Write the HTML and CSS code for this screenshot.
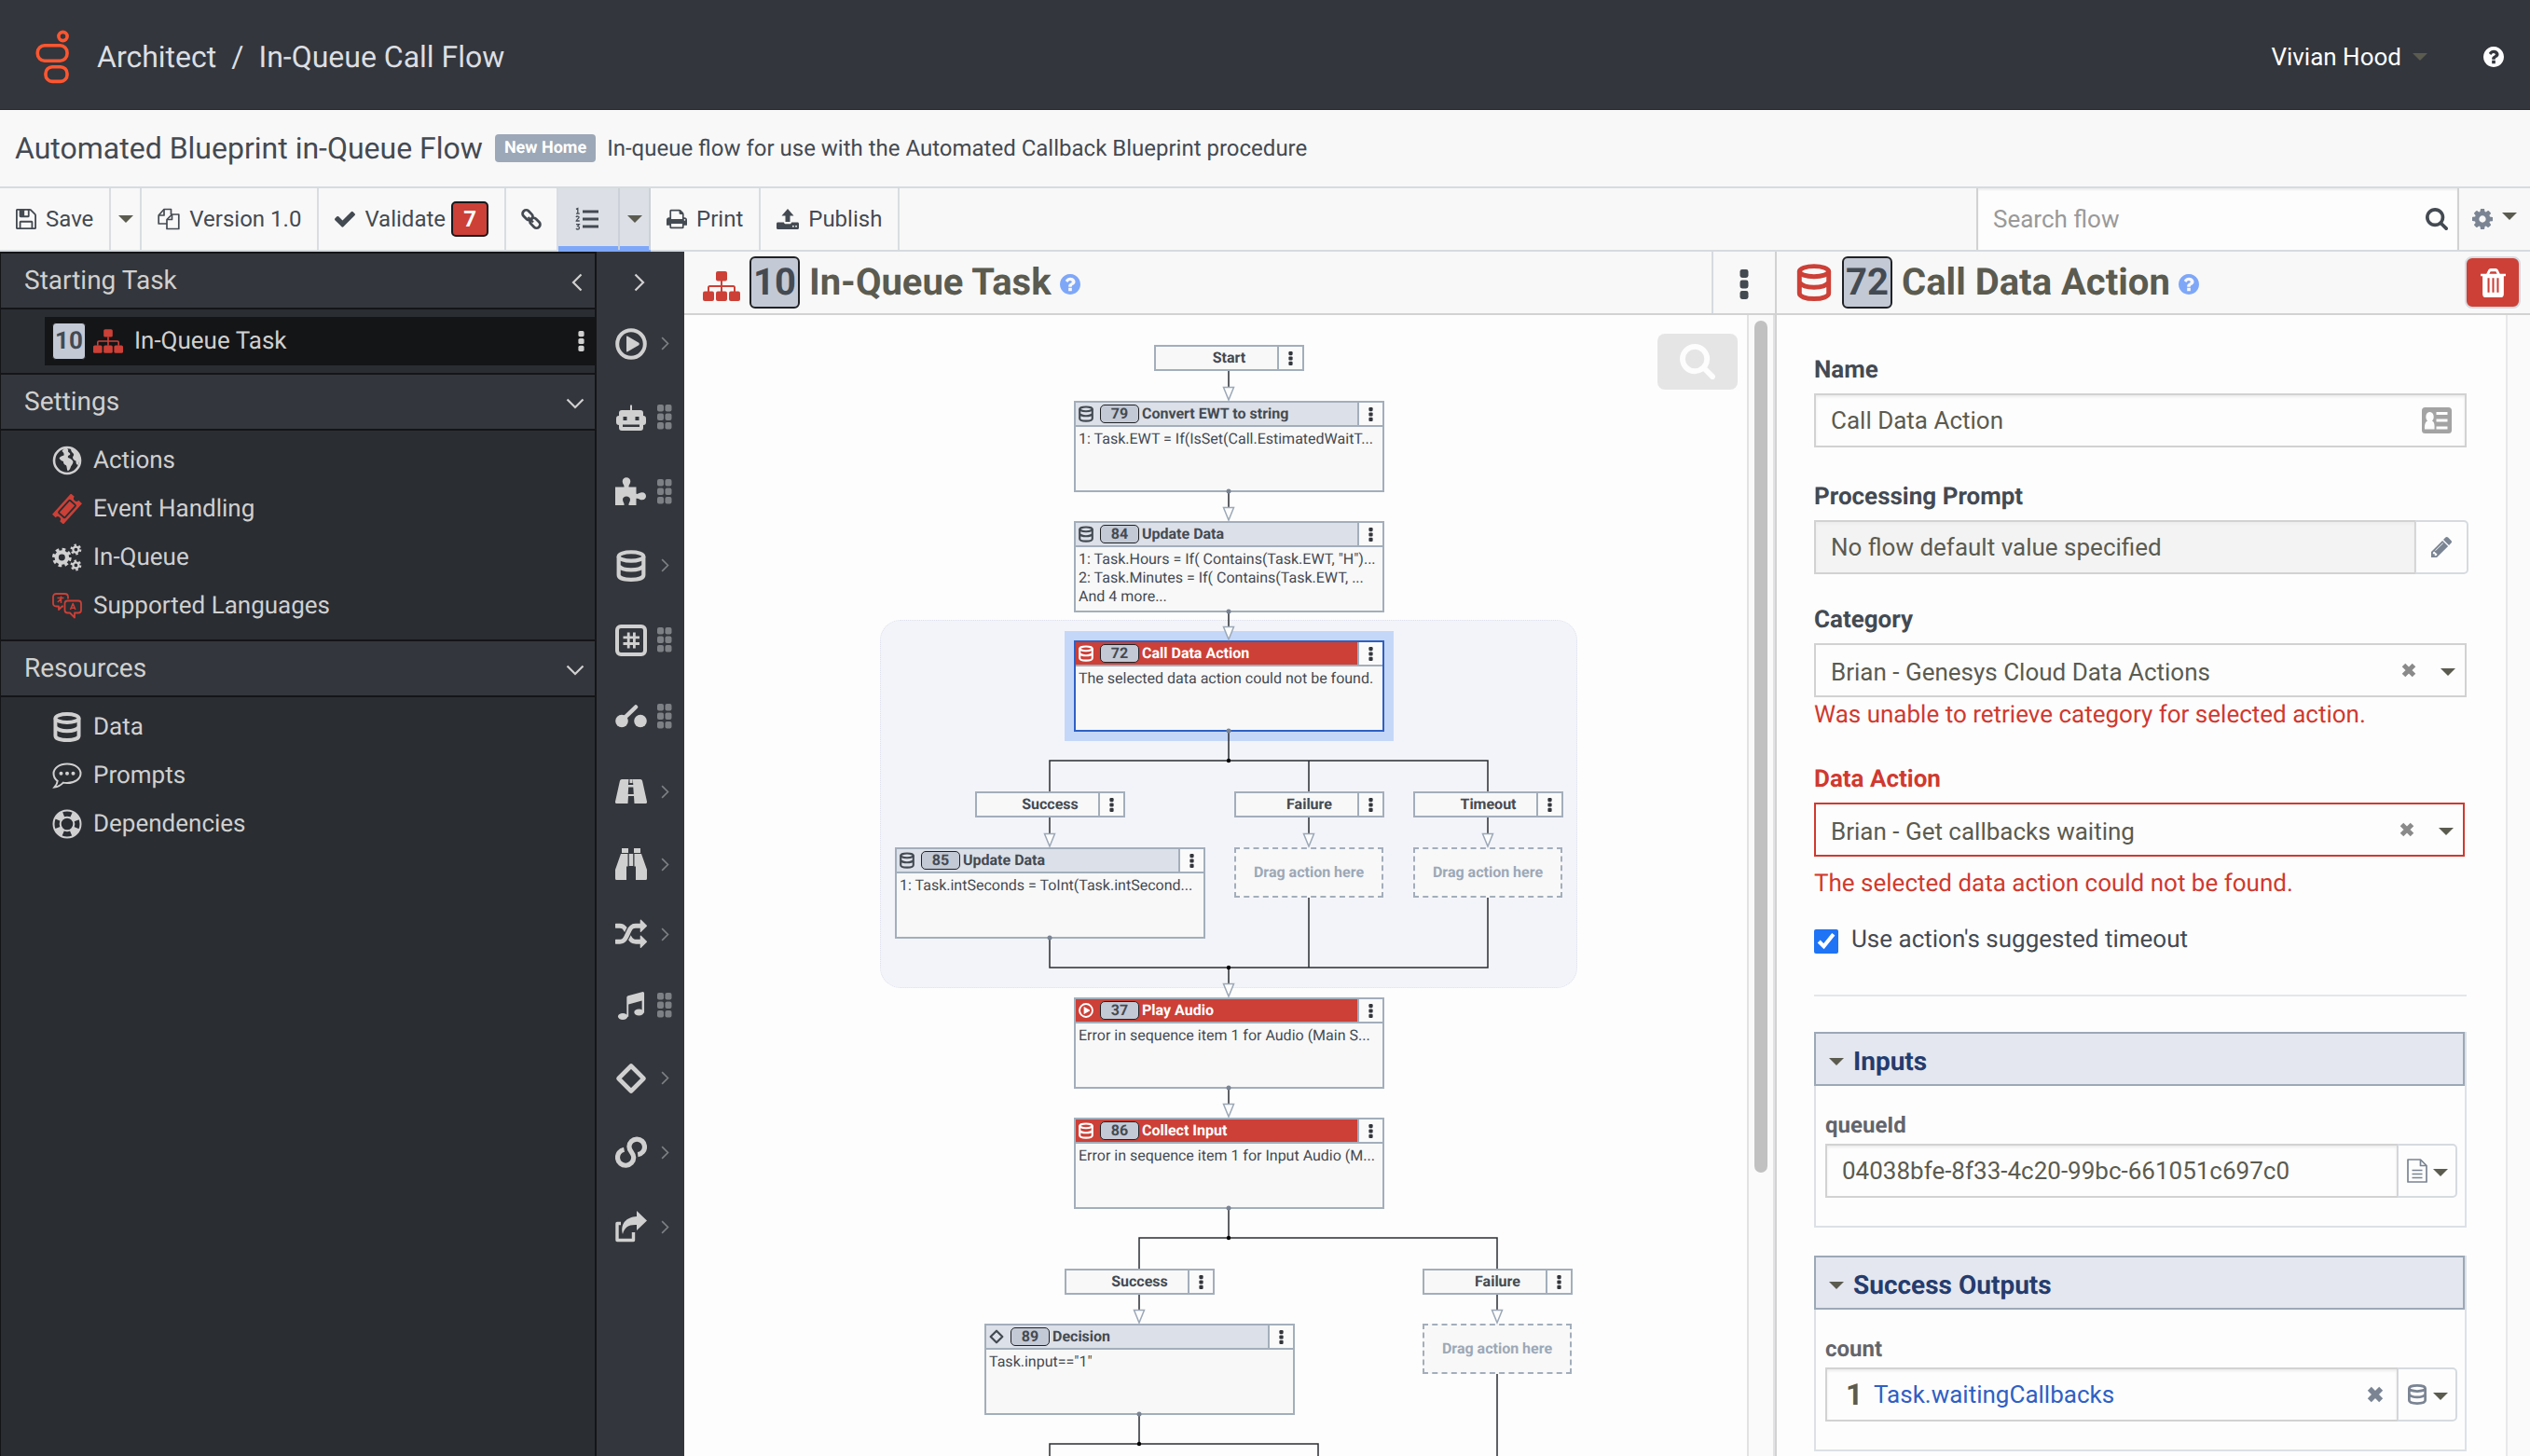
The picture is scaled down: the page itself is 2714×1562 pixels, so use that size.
FILE: index.html
```html
<!DOCTYPE html>
<html lang="en">
<head>
<meta charset="utf-8">
<meta name="viewport" content="width=device-width, initial-scale=1">
<title>Architect / In-Queue Call Flow</title>
<link rel="stylesheet" href="styles.css">
</head>
<body>
<svg class="sprite" aria-hidden="true">
  <symbol id="i-save" viewBox="128 128 1536 1536"><path d="M512 1536h768v-384h-768v384zm896 0h128v-896q0-14-10-38.500t-20-34.500l-281-281q-10-10-34-20t-39-10v416q0 40-28 68t-68 28h-576q-40 0-68-28t-28-68v-416h-128v1280h128v-416q0-40 28-68t68-28h832q40 0 68 28t28 68v416zm-384-928v-320q0-13-9.500-22.500t-22.500-9.500h-192q-13 0-22.500 9.500t-9.500 22.500v320q0 13 9.500 22.500t22.500 9.500h192q13 0 22.500-9.500t9.500-22.500zm640 32v928q0 40-28 68t-68 28h-1344q-40 0-68-28t-28-68v-1344q0-40 28-68t68-28h928q40 0 88 20t76 48l280 280q28 28 48 76t20 88z"/></symbol>
  <symbol id="i-help" viewBox="128 128 1536 1536"><path d="M1024 1376v-192q0-14-9-23t-23-9h-192q-14 0-23 9t-9 23v192q0 14 9 23t23 9h192q14 0 23-9t9-23zm256-672q0-88-55.500-163t-138.500-116-170-41q-243 0-371 213-15 24 8 42l132 100q7 6 19 6 16 0 25-12 53-68 86-92 34-24 86-24 48 0 85.500 26t37.500 59q0 38-20 61t-68 45q-63 28-115.500 86.500t-52.500 125.500v36q0 14 9 23t23 9h192q14 0 23-9t9-23q0-19 21.500-49.500t54.500-49.500q32-18 49-28.500t46-35 44.500-48 28-60.500 12.500-81zm384 192q0 209-103 385.500t-279.500 279.500-385.500 103-385.500-103-279.500-279.500-103-385.500 103-385.500 279.500-279.500 385.500-103 385.500 103 279.500 279.500 103 385.500z"/></symbol>
  <symbol id="i-search" viewBox="64 128 1664 1664"><path d="M1216 832q0-185-131.500-316.500t-316.500-131.500-316.500 131.500-131.500 316.500 131.500 316.500 316.500 131.500 316.500-131.500 131.500-316.500zm512 832q0 52-38 90t-90 38q-54 0-90-38l-343-342q-179 124-399 124-143 0-273.500-55.500t-225-150-150-225-55.500-273.500 55.500-273.500 150-225 225-150 273.500-55.500 273.500 55.500 225 150 150 225 55.500 273.500q0 220-124 399l343 343q37 37 37 90z"/></symbol>
  <symbol id="i-check" viewBox="121 300 1550 1222"><path d="M1671 566q0 40-28 68l-724 724-136 136q-28 28-68 28t-68-28l-136-136-362-362q-28-28-28-68t28-68l136-136q28-28 68-28t68 28l294 295 656-657q28-28 68-28t68 28l136 136q28 28 28 68z"/></symbol>
  <symbol id="i-print" viewBox="64 128 1664 1536"><path d="M448 1536h896v-256h-896v256zm0-640h896v-384h-160q-40 0-68-28t-28-68v-160h-640v640zm1152 64q0-26-19-45t-45-19-45 19-19 45 19 45 45 19 45-19 19-45zm128 0v416q0 13-9.500 22.500t-22.500 9.500h-224v160q0 40-28 68t-68 28h-960q-40 0-68-28t-28-68v-160h-224q-13 0-22.500-9.500t-9.500-22.500v-416q0-79 56.500-135.500t135.500-56.500h64v-544q0-40 28-68t68-28h672q40 0 88 20t76 48l152 152q28 28 48 76t20 88v256h64q79 0 135.500 56.500t56.500 135.500z"/></symbol>
  <symbol id="i-cog" viewBox="128 128 1536 1536"><path d="M1152 896q0-106-75-181t-181-75-181 75-75 181 75 181 181 75 181-75 75-181zm512-109v222q0 12-8 23t-20 13l-185 28q-19 54-39 91 35 50 107 138 10 12 10 25t-9 23q-27 37-99 108t-94 71q-12 0-26-9l-138-108q-44 23-91 38-16 136-29 186-7 28-36 28h-222q-14 0-24.500-8.500t-11.500-21.500l-28-184q-49-16-90-37l-141 107q-10 9-25 9-14 0-25-11-126-114-165-168-7-10-7-23 0-12 8-23 15-21 51-66.500t54-70.500q-27-50-41-99l-183-27q-13-2-21-12.500t-8-23.500v-222q0-12 8-23t19-13l186-28q14-46 39-92-40-57-107-138-10-12-10-24 0-10 9-23 26-36 98.500-107.500t94.500-71.500q13 0 26 10l138 107q44-23 91-38 16-136 29-186 7-28 36-28h222q14 0 24.500 8.500t11.500 21.500l28 184q49 16 90 37l142-107q9-9 24-9 13 0 25 10 129 119 165 170 7 8 7 22 0 12-8 23-15 21-51 66.500t-54 70.500q26 50 41 98l183 28q13 2 21 12.500t8 23.500z"/></symbol>
  <symbol id="i-random" viewBox="0 100 1792 1600"><path d="M666 481q-60 92-137 273-22-45-37-72.500t-40.500-63.500-51-56.500-63-35-81.500-14.500h-224q-14 0-23-9t-9-23v-192q0-14 9-23t23-9h224q250 0 410 225zm1126 799q0 14-9 23l-320 320q-9 9-23 9-13 0-22.500-9.500t-9.500-22.500v-192q-32 0-85 .5t-81 1-73-1-71-5-64-10.500-63-18.500-58-28.500-59-40-55-53.500-56-69.500q59-93 136-273 22 45 37 72.500t40.500 63.500 51 56.500 63 35 81.500 14.500h256v-192q0-14 9-23t23-9q12 0 24 10l319 319q9 9 9 23zm0-896q0 14-9 23l-320 320q-9 9-23 9-13 0-22.500-9.500t-9.500-22.500v-192h-256q-48 0-87 15t-69 45-51 61.500-45 77.500q-32 62-78 171-29 66-49.500 111t-54 105-64 100-74 83-90 68.500-106.500 42-128 16.500h-224q-14 0-23-9t-9-23v-192q0-14 9-23t23-9h224q48 0 87-15t69-45 51-61.500 45-77.500q32-62 78-171 29-66 49.500-111t54-105 64-100 74-83 90-68.500 106.500-42 128-16.500h256v-192q0-14 9-23t23-9q12 0 24 10l319 319q9 9 9 23z"/></symbol>
  <symbol id="i-pencil" viewBox="128 149 1515 1515"><path d="M491 1536l91-91-235-235-91 91v107h128v128h107zm523-928q0-22-22-22-10 0-17 7l-542 542q-7 7-7 17 0 22 22 22 10 0 17-7l542-542q7-7 7-17zm-54-192l416 416-832 832h-416v-416zm683 96q0 53-37 90l-166 166-416-416 166-165q36-38 90-38 53 0 91 38l235 234q37 39 37 91z"/></symbol>
  <symbol id="i-copy" viewBox="0 0 24 24"><g fill="none" stroke="currentColor" stroke-width="1.700" stroke-linejoin="round"><path d="M10 17H1.200V8L7 1.500h7.500V7"/><path d="M7 1.500V8H1.200"/><path d="M10 12.500L15.500 7h7.300v15.500H10z"/><path d="M15.500 7v5.500H10"/></g></symbol>
  <symbol id="i-link" viewBox="0 0 24 24"><g fill="none" stroke="currentColor" stroke-width="2.800"><rect x="2" y="4" width="12" height="7.500" rx="3.500" transform="rotate(45 8 7.800)"/><rect x="10" y="12.500" width="12" height="7.500" rx="3.500" transform="rotate(45 16 16.200)"/></g><path d="M8.500 10l5.500 5.500" stroke="currentColor" stroke-width="2.400"/></symbol>
  <symbol id="i-list" viewBox="0 0 26 26"><g fill="none" stroke="currentColor"><path stroke-width="3" d="M8 5h17M8 13h17M8 21h17"/><path stroke-width="1.300" d="M1 2.300L2.800 1.500V7M1 7.200h3.800M1 11c.5-1.400 3.500-1.300 3 .4C3.800 12.500 1.300 13.500 1.200 15H4.700M1 18.700h3.300l-1.600 2c2.400.1 2.200 3.300.1 3.300-.8 0-1.400-.3-1.900-.8"/></g></symbol>
  <symbol id="i-publish" viewBox="0 0 24 22"><path d="M12 0l6.500 7.500h-4V14h-5V7.500h-4zM1.500 14.500h6.300c.5 1.300 1.300 1.800 2.400 1.800h3.600c1.100 0 1.900-.5 2.400-1.800h6.300c.9 0 1.500.6 1.500 1.500V20.500c0 .9-.6 1.500-1.500 1.500h-21c-.9 0-1.500-.6-1.500-1.500V16c0-.9.600-1.500 1.500-1.500zM17 18v1.500h1.700V18zm3.200 0v1.500h1.700V18z"/></symbol>
  <symbol id="i-caret" viewBox="0 0 16 8"><path d="M0 0h16l-8 8z"/></symbol>
  <symbol id="i-dots" viewBox="0 0 10 32"><rect x=".5" width="9" height="9" rx="2.400"/><rect x=".5" y="11.500" width="9" height="9" rx="2.400"/><rect x=".5" y="23" width="9" height="9" rx="2.400"/></symbol>
  <symbol id="i-left" viewBox="0 0 12 20"><path d="M10.500 1.500L2 10l8.500 8.500" fill="none" stroke="currentColor" stroke-width="2.200"/></symbol>
  <symbol id="i-right" viewBox="0 0 12 20"><path d="M1.500 1.500L10 10l-8.500 8.500" fill="none" stroke="currentColor" stroke-width="2.200"/></symbol>
  <symbol id="i-down" viewBox="0 0 20 12"><path d="M1.500 1.500L10 10l8.500-8.500" fill="none" stroke="currentColor" stroke-width="2.200"/></symbol>
  <symbol id="i-sitemap" viewBox="0 0 40 32"><rect x="14" width="12" height="10.500" rx="2"/><rect y="21.500" width="12" height="10.500" rx="2"/><rect x="14" y="21.500" width="12" height="10.500" rx="2"/><rect x="28" y="21.500" width="12" height="10.500" rx="2"/><path d="M20 10v12M6 22v-4.500q0-1.500 1.500-1.500h25q1.500 0 1.500 1.500V22" fill="none" stroke="currentColor" stroke-width="2"/></symbol>
  <symbol id="i-db" viewBox="0 0 24 26"><g fill="none" stroke="currentColor" stroke-width="3.200"><ellipse cx="12" cy="5.300" rx="10.200" ry="3.600"/><path d="M1.800 5.300v15.200c0 2.300 4 3.900 10.200 3.900s10.200-1.600 10.200-3.900V5.300M1.800 13c1.600 2.200 5.600 3.400 10.200 3.400s8.600-1.200 10.200-3.400"/></g></symbol>
  <symbol id="i-trash" viewBox="0 0 26 30"><path fill-rule="evenodd" d="M0 5.500h6L8 1.500Q8.700 0 10.300 0h5.400q1.600 0 2.300 1.500l2 4h6V8h-2v18.500q0 3.500-3.300 3.500H5.300Q2 30 2 26.500V8H0zm9 0h8l-1.200-2.300h-5.600zM7.200 10v15h2V10zm4.800 0v15h2V10zm4.800 0v15h2V10z"/></symbol>
  <symbol id="i-globe" viewBox="0 0 32 32"><circle cx="16" cy="16" r="14" fill="none" stroke="currentColor" stroke-width="2.600"/><path d="M14.500 2.500c2.500.5 3 2 2.500 4 1.500 1.500 3 2 2 3.500-2 .5-2.500 1.500-2 3 2.500 1 5 2 5.500 4.500-.5 3-2.500 4-3 6.500-.5 1.500-1.500 3-2.800 3.200-1.200-1.700-.7-4-1.700-6-2.500-.7-3-2.200-3-4.200-2-.5-3.500-1.500-4.500-3.500 1.500-2 3-2.500 5-3 .5-2-.5-3-2-4.500 1-2 2.500-3 4-3.500zM20 3.500c4.500 1 8 4.500 9 9 .5 3 0 6-1.500 8.500-2-.5-2-2.500-2-4.500-2-.5-3.500-2-3.500-4 .5-1.500 1.500-2 1-3.500-1.500-1.500-3-3-3-5.500z"/></symbol>
  <symbol id="i-ticket" viewBox="0 0 32 32"><g transform="rotate(-48 16 16)"><path d="M1 8h30v5a3 3 0 0 0 0 6v5H1v-5a3 3 0 0 0 0-6z"/><rect x="7" y="11.500" width="18" height="9" rx="1" fill="none" stroke="#2a2d32" stroke-width="1.800"/></g></symbol>
  <symbol id="i-cogs" viewBox="0 0 34 32"><circle cx="11" cy="16" r="6" fill="none" stroke="currentColor" stroke-width="4.600"/><circle cx="11" cy="16" r="9.200" fill="none" stroke="currentColor" stroke-width="3.600" stroke-dasharray="3.800 3.420"/><g fill="none" stroke="currentColor"><circle cx="27" cy="7" r="3.200" stroke-width="2.400"/><circle cx="27" cy="7" r="5" stroke-width="2.600" stroke-dasharray="2.500 2.740"/><circle cx="27" cy="25" r="3.200" stroke-width="2.400"/><circle cx="27" cy="25" r="5" stroke-width="2.600" stroke-dasharray="2.500 2.740"/></g></symbol>
  <symbol id="i-lang" viewBox="0 0 32 28"><g fill="none" stroke="currentColor" stroke-width="1.800" stroke-linejoin="round"><path d="M12 14.500h-1.500L7 18v-3.500H4.500Q1 14.500 1 11V4.500Q1 1 4.500 1h9Q17 1 17 4.500V6.500"/><path d="M16.500 8.500H28q3 0 3 3v7q0 3-3 3h-4V26.500l-5-5h-2.500q-3 0-3-3v-7q0-3 3-3z"/><path stroke-width="1.500" d="M19.500 18l2.700-6.500 2.700 6.500M20.300 16.300h3.800M5.500 5.500h7M9.500 3.500V11M9.500 6.500L5.800 10"/></g></symbol>
  <symbol id="i-speech" viewBox="0 0 32 28"><path d="M16 1.500c8.300 0 14.500 4.500 14.500 10.300S24.300 22 16 22c-1.500 0-3-.1-4.200-.4C9 24.500 6 26.300 2.500 26.500c1.800-2 3-4 3.200-6.700C3 18 1.500 15 1.500 11.800 1.500 6 7.700 1.500 16 1.500z" fill="none" stroke="currentColor" stroke-width="2"/><circle cx="9.500" cy="11.800" r="2"/><circle cx="16" cy="11.800" r="2"/><circle cx="22.500" cy="11.800" r="2"/></symbol>
  <symbol id="i-ring" viewBox="0 0 32 32"><g fill="none" stroke="currentColor"><circle cx="16" cy="16" r="14.500" stroke-width="2"/><circle cx="16" cy="16" r="7.300" stroke-width="2"/><circle cx="16" cy="16" r="10.900" stroke-width="7" stroke-dasharray="8.560 8.560" stroke-dashoffset="-4.280"/></g></symbol>
  <symbol id="i-play" viewBox="0 0 34 34"><circle cx="17" cy="17" r="14.800" fill="none" stroke="currentColor" stroke-width="4"/><path d="M12 9.500q0-1.500 1.300-.7l12 7q1.200 1.200 0 2.400l-12 7q-1.300.8-1.300-.7z"/></symbol>
  <symbol id="i-bot" viewBox="0 0 34 30"><path fill-rule="evenodd" d="M16 2q1-1.500 2 0v5h9q3 0 3 3v3q3 0 3 3v4q0 3-3 3v3q0 3-3 3H7q-3 0-3-3v-3q-3 0-3-3v-4q0-3 3-3v-3q0-3 3-3h9zM8.500 14v4h4v-4zm13 0v4h4v-4zM8 22.500V25h18v-2.500z"/></symbol>
  <symbol id="i-puzzle" viewBox="0 0 34 30"><path d="M0 10.500h9.500c.5-2-1.800-3.500-1.800-6C7.700 2 9.500.3 12 .3s4.300 1.700 4.300 4.200c0 2.500-2.300 4-1.800 6h8v7.300c2.500.6 3.500-1.500 6.300-1.500 2.700 0 4.200 1.700 4.200 4s-1.500 4-4.200 4c-2.800 0-3.800-2.200-6.300-1.500V30h-8c-.6-2 1.500-3.500 1.500-6 0-2.300-1.800-3.600-4-3.600S8 21.700 8 24c0 2.500 2.200 4 1.500 6H0z"/></symbol>
  <symbol id="i-hash" viewBox="0 0 34 34"><g fill="none" stroke="currentColor"><rect x="2" y="2" width="30" height="30" rx="4" stroke-width="4"/><path stroke-width="2.800" d="M14.200 8.500v17M20.400 8.500v17M8.500 13.800h17.500M8.500 20.500h17.500"/></g></symbol>
  <symbol id="i-switch" viewBox="0 0 34 26"><circle cx="7" cy="18.500" r="6.800"/><circle cx="27" cy="18.500" r="6.800"/><path d="M9 16L22 3.500" stroke="currentColor" stroke-width="4.500" stroke-linecap="round"/></symbol>
  <symbol id="i-road" viewBox="0 0 34 26"><path fill-rule="evenodd" d="M7 0h7.500l-.6 6h5.400l-.6-6H27q1.500 0 2 1.500l5 22.500q.3 2-1.500 2H20.500l-.5-8h-6l-.5 8H1.500Q-.3 26 0 24L5 1.500Q5.500 0 7 0zM15.500 0h3v4h-3zm-1.300 8.500L13.700 16h6.100l-.5-7.500z"/></symbol>
  <symbol id="i-binoc" viewBox="0 0 34 34"><path d="M7 0h7v5H7zM20 0h7v5h-7zM14.800 6h4.400v13h-4.400zM6 6h7.500v13.500H12V34H1.500Q0 34 0 32.500V23zM28 6h-7.500v13.500H22V34h10.500q1.500 0 1.500-1.500V23z"/></symbol>
  <symbol id="i-music" viewBox="0 0 30 32"><ellipse cx="5.500" cy="28.300" rx="5.500" ry="3.700"/><ellipse cx="24" cy="23.500" rx="5.500" ry="3.700"/><path d="M10 6.500Q10 5 11.500 4.500l16-4.300Q30-.4 30 1.700V24h-2.600V10L12 14.500v14H10z"/></symbol>
  <symbol id="i-diamond" viewBox="0 0 34 34"><path d="M17 3.500L30.500 17 17 30.500 3.500 17z" fill="none" stroke="currentColor" stroke-width="4.600" stroke-linejoin="round"/></symbol>
  <symbol id="i-loop" viewBox="0 0 34 34"><path d="M9.500 14.200a8.600 8.600 0 1 0 10.200 8.400c0-4.600-4.800-6.600-4.800-11.600a8.300 8.300 0 1 1 9.300 8.600" fill="none" stroke="currentColor" stroke-width="5.200"/></symbol>
  <symbol id="i-share" viewBox="0 0 34 34"><path d="M6 13.500H2V31.500H19.500V23" fill="none" stroke="currentColor" stroke-width="3.400" stroke-linejoin="round"/><path d="M23 0l11 10.500L23 21v-6C15 14.500 10 17 8 25 5 14 12 6.500 23 6z"/></symbol>
  <symbol id="i-grip" viewBox="0 0 16 27"><g><rect width="7" height="7.500" rx="2"/><rect x="8.500" width="7" height="7.500" rx="2"/><rect y="9.500" width="7" height="7.500" rx="2"/><rect x="8.500" y="9.500" width="7" height="7.500" rx="2"/><rect y="19" width="7" height="7.500" rx="2"/><rect x="8.500" y="19" width="7" height="7.500" rx="2"/></g></symbol>
  <symbol id="i-times" viewBox="0 0 16 16"><path d="M2.500 2.500l11 11M13.500 2.500l-11 11" stroke="currentColor" stroke-width="5"/></symbol>
  <symbol id="i-card" viewBox="0 0 32 28"><path fill-rule="evenodd" d="M3.500 0h25Q32 0 32 3.500v21q0 3.500-3.500 3.500h-25Q0 28 0 24.500v-21Q0 0 3.500 0zM3 23.500h10.500C14 18 13 15.500 11 14.500c1.500-1.500 2-3.500 1.500-6C12 6.500 10.500 5 8.500 5S5 6.500 4.500 8.500c-.5 2.500 0 4.500 1.500 6-2 1-3.300 3.500-3 9zM15.500 5v3h12V5zm0 7.500v3h12v-3zm0 8v3h12v-3z"/></symbol>
  <symbol id="i-doc" viewBox="0 0 22 26"><path d="M1 1h13.500L21 7.500V25H1zM14.500 1v6.500H21M5.500 12.500h11M5.500 16.500h11M5.500 20.500h11" fill="none" stroke="currentColor" stroke-width="1.700" stroke-linejoin="round"/></symbol>
</svg>

<header class="topbar">
  <svg class="logo" viewBox="38 29 37 58" aria-label="Genesys"><g fill="none" stroke="#ff5630" stroke-width="3.600"><circle cx="67.500" cy="36" r="4.600"/><rect x="40.300" y="45.800" width="31.700" height="16.400" rx="7.500"/><rect x="49" y="68.800" width="23" height="15.600" rx="7"/></g></svg>
  <nav class="crumbs"><a href="#">Architect</a><span>/</span><a href="#">In-Queue Call Flow</a></nav>
  <button class="user" type="button">Vivian Hood <svg class="caret"><use href="#i-caret"/></svg></button>
  <button class="help" type="button" aria-label="Help"><svg class="ic22"><use href="#i-help"/></svg></button>
</header>

<div class="titlebar">
  <h1>Automated Blueprint in-Queue Flow</h1>
  <span class="tag">New Home</span>
  <p>In-queue flow for use with the Automated Callback Blueprint procedure</p>
</div>

<div class="toolbar">
  <button type="button"><svg class="ic22"><use href="#i-save"/></svg>Save</button>
  <button type="button" class="drop" aria-label="Save options"><svg class="caret"><use href="#i-caret"/></svg></button>
  <button type="button"><svg class="ic24"><use href="#i-copy"/></svg>Version 1.0</button>
  <button type="button"><svg class="ic22"><use href="#i-check"/></svg>Validate<span class="count">7</span></button>
  <button type="button" class="icon-only" aria-label="Link"><svg class="ic24"><use href="#i-link"/></svg></button>
  <button type="button" class="list on" aria-label="Numbering"><svg class="ic26"><use href="#i-list"/></svg></button>
  <button type="button" class="drop on" aria-label="Numbering options"><svg class="caret"><use href="#i-caret"/></svg></button>
  <button type="button"><svg class="ic22"><use href="#i-print"/></svg>Print</button>
  <button type="button"><svg class="ic24"><use href="#i-publish"/></svg>Publish</button>
  <div class="search">
    <input type="text" placeholder="Search flow" aria-label="Search flow">
    <svg class="ic24"><use href="#i-search"/></svg>
  </div>
  <button type="button" class="gear" aria-label="Settings"><svg class="ic22"><use href="#i-cog"/></svg><svg class="caret"><use href="#i-caret"/></svg></button>
</div>

<div class="workspace">
  <nav class="side">
    <h2>Starting Task <button type="button" aria-label="Collapse"><svg class="chev"><use href="#i-left"/></svg></button></h2>
    <div class="tasks">
      <a class="task" href="#"><span class="num">10</span><svg class="ic30 red"><use href="#i-sitemap"/></svg><span class="grow">In-Queue Task</span><svg class="dots"><use href="#i-dots"/></svg></a>
    </div>
    <h2>Settings <button type="button" aria-label="Toggle settings"><svg class="chev-d"><use href="#i-down"/></svg></button></h2>
    <ul>
      <li><a href="#"><svg class="ic30"><use href="#i-globe"/></svg>Actions</a></li>
      <li><a href="#"><svg class="ic30 red"><use href="#i-ticket"/></svg>Event Handling</a></li>
      <li><a href="#"><svg class="ic30"><use href="#i-cogs"/></svg>In-Queue</a></li>
      <li><a href="#"><svg class="ic30 red"><use href="#i-lang"/></svg>Supported Languages</a></li>
    </ul>
    <h2>Resources <button type="button" aria-label="Toggle resources"><svg class="chev-d"><use href="#i-down"/></svg></button></h2>
    <ul>
      <li><a href="#"><svg class="ic30"><use href="#i-db"/></svg>Data</a></li>
      <li><a href="#"><svg class="ic30"><use href="#i-speech"/></svg>Prompts</a></li>
      <li><a href="#"><svg class="ic30"><use href="#i-ring"/></svg>Dependencies</a></li>
    </ul>
  </nav>

  <div class="rail">
    <button type="button" class="expand" aria-label="Expand toolbox"><svg class="chev"><use href="#i-right"/></svg></button>
    <button type="button" aria-label="Audio"><svg class="tool"><use href="#i-play"/></svg><svg class="more"><use href="#i-right"/></svg></button>
    <button type="button" aria-label="Bot"><svg class="tool short"><use href="#i-bot"/></svg><svg class="grip"><use href="#i-grip"/></svg></button>
    <button type="button" aria-label="Common module"><svg class="tool short"><use href="#i-puzzle"/></svg><svg class="grip"><use href="#i-grip"/></svg></button>
    <button type="button" aria-label="Data"><svg class="tool"><use href="#i-db"/></svg><svg class="more"><use href="#i-right"/></svg></button>
    <button type="button" aria-label="Digital menu"><svg class="tool"><use href="#i-hash"/></svg><svg class="grip"><use href="#i-grip"/></svg></button>
    <button type="button" aria-label="Disconnect"><svg class="tool"><use href="#i-switch"/></svg><svg class="grip"><use href="#i-grip"/></svg></button>
    <button type="button" aria-label="External"><svg class="tool"><use href="#i-road"/></svg><svg class="more"><use href="#i-right"/></svg></button>
    <button type="button" aria-label="Find"><svg class="tool"><use href="#i-binoc"/></svg><svg class="more"><use href="#i-right"/></svg></button>
    <button type="button" aria-label="Flow"><svg class="tool"><use href="#i-random"/></svg><svg class="more"><use href="#i-right"/></svg></button>
    <button type="button" aria-label="Hold music"><svg class="tool short"><use href="#i-music"/></svg><svg class="grip"><use href="#i-grip"/></svg></button>
    <button type="button" aria-label="Logical"><svg class="tool"><use href="#i-diamond"/></svg><svg class="more"><use href="#i-right"/></svg></button>
    <button type="button" aria-label="Loop"><svg class="tool"><use href="#i-loop"/></svg><svg class="more"><use href="#i-right"/></svg></button>
    <button type="button" aria-label="Transfer"><svg class="tool"><use href="#i-share"/></svg><svg class="more"><use href="#i-right"/></svg></button>
  </div>

  <main class="flow">
    <div class="pane-head">
      <svg class="head-icon"><use href="#i-sitemap"/></svg><span class="num big">10</span>
      <h2>In-Queue Task</h2><svg class="ic22 hint"><use href="#i-help"/></svg>
      <button type="button" class="menu" aria-label="Task menu"><svg><use href="#i-dots"/></svg></button>
    </div>
    <div class="canvas-row">
      <div class="canvas">
        <div class="group"></div>
        <div class="label at-start"><span>Start</span><button type="button" aria-label="Menu"><svg><use href="#i-dots"/></svg></button></div>
        <section class="node at-79"><header><svg><use href="#i-db"/></svg><b class="id">79</b><h3>Convert EWT to string</h3><button type="button" aria-label="Menu"><svg><use href="#i-dots"/></svg></button></header><p>1: Task.EWT = If(IsSet(Call.EstimatedWaitT...</p></section>
        <section class="node at-84"><header><svg><use href="#i-db"/></svg><b class="id">84</b><h3>Update Data</h3><button type="button" aria-label="Menu"><svg><use href="#i-dots"/></svg></button></header><p>1: Task.Hours = If( Contains(Task.EWT, "H")...<br>2: Task.Minutes = If( Contains(Task.EWT, ...<br>And 4 more...</p></section>
        <section class="node error selected at-72"><header><svg><use href="#i-db"/></svg><b class="id">72</b><h3>Call Data Action</h3><button type="button" aria-label="Menu"><svg><use href="#i-dots"/></svg></button></header><p>The selected data action could not be found.</p></section>
        <div class="label at-72-success"><span>Success</span><button type="button" aria-label="Menu"><svg><use href="#i-dots"/></svg></button></div>
        <div class="label at-72-failure"><span>Failure</span><button type="button" aria-label="Menu"><svg><use href="#i-dots"/></svg></button></div>
        <div class="label at-72-timeout"><span>Timeout</span><button type="button" aria-label="Menu"><svg><use href="#i-dots"/></svg></button></div>
        <section class="node at-85"><header><svg><use href="#i-db"/></svg><b class="id">85</b><h3>Update Data</h3><button type="button" aria-label="Menu"><svg><use href="#i-dots"/></svg></button></header><p>1: Task.intSeconds = ToInt(Task.intSecond...</p></section>
        <div class="slot at-slot-failure">Drag action here</div>
        <div class="slot at-slot-timeout">Drag action here</div>
        <section class="node error at-37"><header><svg><use href="#i-play"/></svg><b class="id">37</b><h3>Play Audio</h3><button type="button" aria-label="Menu"><svg><use href="#i-dots"/></svg></button></header><p>Error in sequence item 1 for Audio (Main S...</p></section>
        <section class="node error at-86"><header><svg><use href="#i-db"/></svg><b class="id">86</b><h3>Collect Input</h3><button type="button" aria-label="Menu"><svg><use href="#i-dots"/></svg></button></header><p>Error in sequence item 1 for Input Audio (M...</p></section>
        <div class="label at-86-success"><span>Success</span><button type="button" aria-label="Menu"><svg><use href="#i-dots"/></svg></button></div>
        <div class="label at-86-failure"><span>Failure</span><button type="button" aria-label="Menu"><svg><use href="#i-dots"/></svg></button></div>
        <section class="node at-89"><header><svg><use href="#i-diamond"/></svg><b class="id">89</b><h3>Decision</h3><button type="button" aria-label="Menu"><svg><use href="#i-dots"/></svg></button></header><p>Task.input=="1"</p></section>
        <div class="slot at-slot-86">Drag action here</div>
        <svg class="wires" viewBox="0 0 1141 1224">
          <g class="wire">
            <path d="M584 60v17M584 190v16M584 319v15M584 447v31M392 511v-33h470v33M670 478v33M392 539v17M670 539v17M862 539v17M392 668v32h470v-75M670 625v75M584 700v17M584 830v16M584 959v31M488 1023v-33h384v33M488 1051v16M872 1051v16M872 1136v88M488 1180v31M392 1224v-13h288v13"/>
          </g>
          <g class="tip">
            <path d="M578.500 77.500h11L584 91zM578.500 206.500h11L584 220zM578.500 334.500h11L584 348zM386.500 556.500h11L392 570zM664.500 556.500h11L670 570zM856.500 556.500h11L862 570zM578.500 717.500h11L584 731zM578.500 846.500h11L584 860zM482.500 1067.500h11L488 1081zM866.500 1067.500h11L872 1081z"/>
          </g>
          <g class="joint"><circle cx="584" cy="478" r="2.200"/><circle cx="584" cy="700" r="2.200"/><circle cx="584" cy="990" r="2.200"/><circle cx="488" cy="1211" r="2.200"/></g>
          <g class="port"><circle cx="584" cy="189" r="2.500"/><circle cx="584" cy="318" r="2.500"/><circle cx="584" cy="446" r="2.500"/><circle cx="392" cy="668" r="2.500"/><circle cx="584" cy="829" r="2.500"/><circle cx="584" cy="958" r="2.500"/><circle cx="488" cy="1179" r="2.500"/></g>
        </svg>
        <button type="button" class="zoom" aria-label="Zoom"><svg><use href="#i-search"/></svg></button>
      </div>
      <div class="scroll"><div class="thumb"></div></div>
    </div>
  </main>

  <aside class="props">
    <div class="pane-head">
      <svg class="head-icon db"><use href="#i-db"/></svg><span class="num big">72</span>
      <h2>Call Data Action</h2><svg class="ic22 hint"><use href="#i-help"/></svg>
      <button type="button" class="trash" aria-label="Delete"><svg><use href="#i-trash"/></svg></button>
    </div>
    <form class="form">
      <div class="field">
        <label for="name">Name</label>
        <div class="box inset"><input id="name" type="text" value="Call Data Action"><svg class="card"><use href="#i-card"/></svg></div>
      </div>
      <div class="field">
        <label for="prompt">Processing Prompt</label>
        <div class="combo"><div class="box inset muted"><input id="prompt" type="text" value="No flow default value specified" readonly></div><button type="button" aria-label="Edit prompt"><svg class="ic22"><use href="#i-pencil"/></svg></button></div>
      </div>
      <div class="field tight">
        <label for="category">Category</label>
        <div class="box pick"><select id="category"><option>Brian - Genesys Cloud Data Actions</option></select><button type="button" aria-label="Clear"><svg class="clear"><use href="#i-times"/></svg></button><svg class="caret"><use href="#i-caret"/></svg></div>
        <p class="error-text">Was unable to retrieve category for selected action.</p>
      </div>
      <div class="field invalid">
        <label for="action">Data Action</label>
        <div class="box pick"><select id="action"><option>Brian - Get callbacks waiting</option></select><button type="button" aria-label="Clear"><svg class="clear"><use href="#i-times"/></svg></button><svg class="caret"><use href="#i-caret"/></svg></div>
        <p class="error-text">The selected data action could not be found.</p>
      </div>
      <div class="tick"><input id="timeout" type="checkbox" checked><label for="timeout">Use action's suggested timeout</label></div>
      <hr>
      <section class="io">
        <h3><svg class="caret"><use href="#i-caret"/></svg>Inputs</h3>
        <div class="io-body">
          <label for="queue">queueId</label>
          <div class="combo wide"><div class="box inset"><input id="queue" type="text" value="04038bfe-8f33-4c20-99bc-661051c697c0"></div><button type="button" aria-label="Value type"><svg class="doc"><use href="#i-doc"/></svg><svg class="caret"><use href="#i-caret"/></svg></button></div>
        </div>
      </section>
      <section class="io">
        <h3><svg class="caret"><use href="#i-caret"/></svg>Success Outputs</h3>
        <div class="io-body">
          <label for="count">count</label>
          <div class="combo wide"><div class="box inset var"><b>1</b><input id="count" type="text" value="Task.waitingCallbacks"><button type="button" aria-label="Clear"><svg class="clear"><use href="#i-times"/></svg></button></div><button type="button" aria-label="Variable type"><svg class="ic22"><use href="#i-db"/></svg><svg class="caret"><use href="#i-caret"/></svg></button></div>
        </div>
      </section>
    </form>
    <div class="gutter"></div>
  </aside>
</div>
</body>
</html>
```

FILE: styles.css
```css
* { box-sizing: border-box; margin: 0; padding: 0; }
html, body { height: 100%; }
body {
  display: flex; flex-direction: column; overflow: hidden;
  font: 26px/32px Roboto, "Liberation Sans", sans-serif;
  color: #444a52; background: #fdfdfd; text-rendering: geometricPrecision;
}
button, input, select { font: inherit; color: inherit; background: none; border: 0; border-radius: 0; outline: 0; }
button { display: flex; align-items: center; cursor: pointer; flex: none; }
a { color: inherit; text-decoration: none; }
ul { list-style: none; }
svg { flex: none; display: block; fill: currentColor; }
.sprite { position: absolute; width: 0; height: 0; }

.ic22 { width: 22px; height: 22px; }
.ic24 { width: 24px; height: 24px; }
.ic26 { width: 26px; height: 26px; }
.ic30 { width: 32px; height: 32px; }
.caret { width: 16px; height: 8px; color: #5b5b50; }
.clear { width: 16px; height: 16px; }
.red { color: #cc4037; }

/* Top bar */
.topbar {
  display: flex; align-items: center; flex: none; height: 118px;
  padding: 4px 28px 0 38px; background: #33363c; border-bottom: 1px solid #26282c; color: #fdfdfd;
}
.logo { width: 37px; height: 58px; }
.crumbs { display: flex; gap: 16px; margin-left: 29px; flex: 1; font-size: 32px; line-height: 40px; color: #dcdee2; }
.user { gap: 12px; }
.help { margin-left: 60px; }

/* Flow name */
.titlebar { display: flex; align-items: center; flex: none; height: 82px; padding: 0 16px; background: #f8f8f8; }
.titlebar h1 { font-size: 32px; line-height: 40px; font-weight: 400; }
.titlebar p { font-size: 24px; margin-left: 12px; }
.tag { margin-left: 13px; padding: 0 10px; border-radius: 4px; background: #9ca8b7; color: #fff; font-size: 18px; line-height: 30px; font-weight: 700; }

/* Toolbar */
.toolbar { display: flex; flex: none; height: 70px; border: solid #d6dbe0; border-width: 2px 0; background: #f8f8f8; }
.toolbar > button { gap: 10px; padding: 0 17px; border-right: 2px solid #d9dde2; font-size: 24px; }
.toolbar > .drop { padding: 0 7px 0 8px; }
.toolbar .count { width: 40px; margin-left: -4px; border: 2px solid #17181a; border-radius: 5px; background: #cc4037; color: #fff; line-height: 34px; font-weight: 700; text-align: center; }
.toolbar > .icon-only { padding: 0 15px; }
.toolbar > .list { padding: 0 20px 0 18px; }
.toolbar > .on { background: #dce0e6; border-right-color: #cbd1d8; box-shadow: inset 0 -4px #7ea7f8, 0 2px #7ea7f8; }
.search { display: flex; align-items: center; width: 518px; margin-left: auto; padding: 0 10px 0 16px; border: solid #d2d2d2; border-width: 0 2px; background: #fdfdfd; box-shadow: inset 0 2px 2px #eee; }
.search input { flex: 1; min-width: 0; }
.search input::placeholder { color: #999; opacity: 1; }
.toolbar > .gear { padding: 0 14px; border: 0; color: #7a8493; }
.gear .caret { margin-top: -6px; }

/* Workspace */
.workspace { display: flex; flex: 1; min-height: 0; }
.side { width: 640px; flex: none; background: #2a2d32; color: #d0d0d0; border: solid #141517; border-width: 0 2px 0 1px; }
.side h2 { display: flex; align-items: center; justify-content: space-between; height: 62px; padding: 0 11px 0 25px; border: solid #141517; border-width: 2px 0; background: #33363c; font-size: 28px; font-weight: 400; }
.side h2 button { padding: 4px 0 0; }
.chev { width: 12px; height: 20px; margin: 0 2px 0 4px; }
.chev-d { width: 20px; height: 12px; }
.tasks { padding: 8px 0 8px 47px; }
.task { display: flex; align-items: center; height: 52px; padding: 0 11px 0 8px; background: #141517; }
.grow { flex: 1; }
.task .ic30 { margin: 0 12px 0 8px; }
.dots { width: 7px; height: 22px; }
.num { width: 36px; border: 1px solid #17181a; border-radius: 4px; background: #c3c9d5; color: #444a52; line-height: 38px; text-align: center; font-weight: 700; }
.side ul { padding: 6px 0 10px; }
.side li a { display: flex; align-items: center; gap: 12px; height: 52px; padding-left: 55px; }

.rail {
  width: 94px; flex: none; background: #33363c; color: #d0d0d0; display: grid; align-content: start;
  grid-template-rows: 59px 79px 79px 80px 79px 81px 82px 80px 76px 75px 77px 79px 80px 80px;
}
.rail button { gap: 14px; padding-left: 20px; }
.rail .expand { padding: 6px 0 0 36px; }
.tool { width: 34px; height: 34px; }
.tool.short { height: 30px; }
.more { width: 9px; height: 15px; color: #7d8084; margin-left: 1px; }
.grip { width: 16px; height: 27px; color: #7d8084; margin-left: -3px; }

.pane-head { display: flex; align-items: center; flex: none; height: 68px; padding-left: 20px; border-bottom: 2px solid #d2d2d2; background: #f8f8f8; }
.pane-head h2 { font-size: 40px; line-height: 48px; font-weight: 700; color: #5b5b50; }
.head-icon { width: 40px; height: 32px; color: #cc4037; margin-top: 8px; }
.head-icon.db { width: 40px; height: 40px; margin: 0; }
.num.big { width: 54px; margin: 0 10px; border: 2px solid #202225; border-radius: 6px; font-size: 40px; line-height: 52px; }
.hint { color: #7ea7f8; margin: 4px 0 0 9px; }
.menu { height: 66px; margin-left: auto; padding: 4px 28px 0; border-left: 2px solid #d6dbe0; }
.menu svg { width: 10px; height: 32px; }

/* Flow canvas */
.flow { flex: 1; min-width: 0; display: flex; flex-direction: column; }
.canvas-row { flex: 1; min-height: 0; display: flex; }
.canvas { position: relative; flex: 1; overflow: hidden; font-size: 16px; line-height: 20px; }
.scroll { width: 30px; flex: none; padding: 6px 6px 0; border: solid #e2e2e4; border-width: 0 2px; background: #fafafa; }
.thumb { height: 75%; border-radius: 8px; background: #c1c1c1; }
.group { position: absolute; left: 210px; top: 327px; width: 748px; height: 395px; border: 1px dotted #dde0ec; border-radius: 22px; background: #f3f4fa; }
.wires { position: absolute; left: 0; top: 0; width: 1141px; height: 1224px; pointer-events: none; }
.wire { fill: none; stroke: #2a2d32; stroke-width: 1.5; }
.tip { fill: #fdfdfd; stroke: #9ca8b7; stroke-width: 1.5; }
.joint { fill: #000; }
.port { fill: #7a8493; }

.node, .label, .slot { position: absolute; background: #f8f8f8; }
.node { width: 333px; height: 98px; border: 2px solid #a3aebb; }
.node header { display: flex; align-items: center; height: 26px; border-bottom: 2px solid #a3aebb; background: #dce0e8; }
.node header > svg { width: 16px; height: 18px; margin: 0 7px 0 3px; }
.node h3 { flex: 1; font-size: 16px; line-height: 20px; font-weight: 700; }
.id { width: 42px; margin-right: 3px; border: 1px solid #202225; border-radius: 5px; background: #c3c9d5; color: #444a52; line-height: 18px; text-align: center; }
.node button, .label button { align-self: stretch; width: 27px; justify-content: center; border-left: 2px solid #a3aebb; background: #fafafa; color: #33363c; }
.node button svg, .label button svg { width: 5px; height: 15px; }
.node p { padding: 3px; white-space: nowrap; overflow: hidden; }
.node.error header { background: #cc4037; color: #fff; }
.node.selected { border-color: #2f60c4; outline: 2px solid #2f60c4; outline-offset: -2px; box-shadow: 0 0 0 10px #c5d7f8; }
.label { display: flex; width: 161px; height: 28px; border: 2px solid #a3aebb; font-weight: 700; line-height: 24px; }
.label span { flex: 1; padding-left: 27px; text-align: center; }
.slot { width: 160px; height: 54px; border: 2px dashed #a3aebb; color: #9ca8b7; font-weight: 700; line-height: 50px; text-align: center; }

.at-start { left: 504px; top: 32px; }
.at-79 { left: 418px; top: 92px; }
.at-84 { left: 418px; top: 221px; }
.at-72 { left: 418px; top: 349px; }
.at-72-success { left: 312px; top: 511px; }
.at-72-failure { left: 590px; top: 511px; }
.at-72-timeout { left: 782px; top: 511px; }
.at-85 { left: 226px; top: 571px; }
.at-slot-failure { left: 590px; top: 571px; }
.at-slot-timeout { left: 782px; top: 571px; }
.at-37 { left: 418px; top: 732px; }
.at-86 { left: 418px; top: 861px; }
.at-86-success { left: 408px; top: 1023px; }
.at-86-failure { left: 792px; top: 1023px; }
.at-89 { left: 322px; top: 1082px; }
.at-slot-86 { left: 792px; top: 1082px; }
.zoom { position: absolute; top: 20px; right: 10px; width: 86px; height: 60px; justify-content: center; border-radius: 8px; background: #e5e5e5; color: #fdfdfd; }
.zoom svg { width: 38px; height: 38px; }

/* Properties */
.props { width: 810px; flex: none; display: grid; grid-template-columns: 1fr 26px; grid-template-rows: 68px 1fr; border-left: 2px solid #d2d2d2; min-height: 0; }
.props .pane-head { grid-column: 1 / -1; padding-right: 10px; }
.trash { width: 60px; height: 56px; margin-left: auto; justify-content: center; border: 2px solid #d6dbe0; border-radius: 8px; background: #cc4037; color: #fff; }
.trash svg { width: 27px; height: 31px; }
.gutter { border-left: 2px solid #e8e8ea; background: #fafafa; }
.form { padding: 43px 42px 0 40px; overflow: hidden; }
.field { margin-bottom: 37px; }
.field > label { display: block; margin-bottom: 9px; font-weight: 700; }
.box { display: flex; align-items: center; height: 58px; padding: 0 14px 0 16px; border: 2px solid #d2d2d2; background: #fdfdfd; color: #5b5b50; flex: 1; min-width: 0; }
.inset { box-shadow: inset 0 2px 3px #ececec; }
.muted { background: #f3f3f3; }
.box input, .box select { flex: 1; min-width: 0; height: 100%; appearance: none; }
.pick { padding-right: 10px; }
.box .caret { margin: 4px 0 0 26px; }
.box .clear { color: #8a8a8a; }
.box select { padding-top: 4px; }
.card { width: 32px; height: 28px; color: #a3a3a3; }
.doc { width: 22px; height: 26px; }
.combo { display: flex; }
.combo > button { width: 57px; justify-content: center; border: 2px solid #d6dbe0; border-left-width: 1px; border-radius: 0 5px 5px 0; color: #7a8493; }
.combo .box { border-right-width: 1px; }
.wide > button { width: 64px; gap: 6px; }
.field:nth-child(2) { margin-bottom: 33px; margin-right: -2px; }
.tight .error-text { margin-top: 3px; }
.error-text { color: #d0392f; }
.invalid { margin-bottom: 28px; }
.invalid > label { color: #d0392f; }
.invalid .box { border-color: #d0392f; margin-right: 2px; }
.invalid .error-text { margin-top: 13px; }
.tick { display: flex; align-items: center; gap: 14px; }
.tick input { width: 26px; height: 26px; margin-top: 4px; accent-color: #1f73f5; }
hr { border: 0; border-top: 2px solid #e3e7eb; margin: 43px 0 38px; }
.io { margin-bottom: 30px; border: 2px solid #dce1e7; border-top: 0; }
.io h3 { display: flex; align-items: center; gap: 10px; height: 58px; margin: 0 0 0 -2px; padding: 6px 14px 0; border: 2px solid #9ca8b7; background: #e4e7ef; color: #253c6e; font-size: 28px; font-weight: 700; }
.io-body { padding: 26px 8px 30px 10px; }
.io-body label { display: block; margin-bottom: 4px; font-size: 24px; font-weight: 700; color: #63656b; }
.wide .caret { margin: 4px 0 0; }
.var b { width: 34px; padding-left: 4px; font-size: 32px; }
.var input { color: #2f60c4; }
.var .clear { width: 18px; height: 18px; color: #7a8493; }
```
